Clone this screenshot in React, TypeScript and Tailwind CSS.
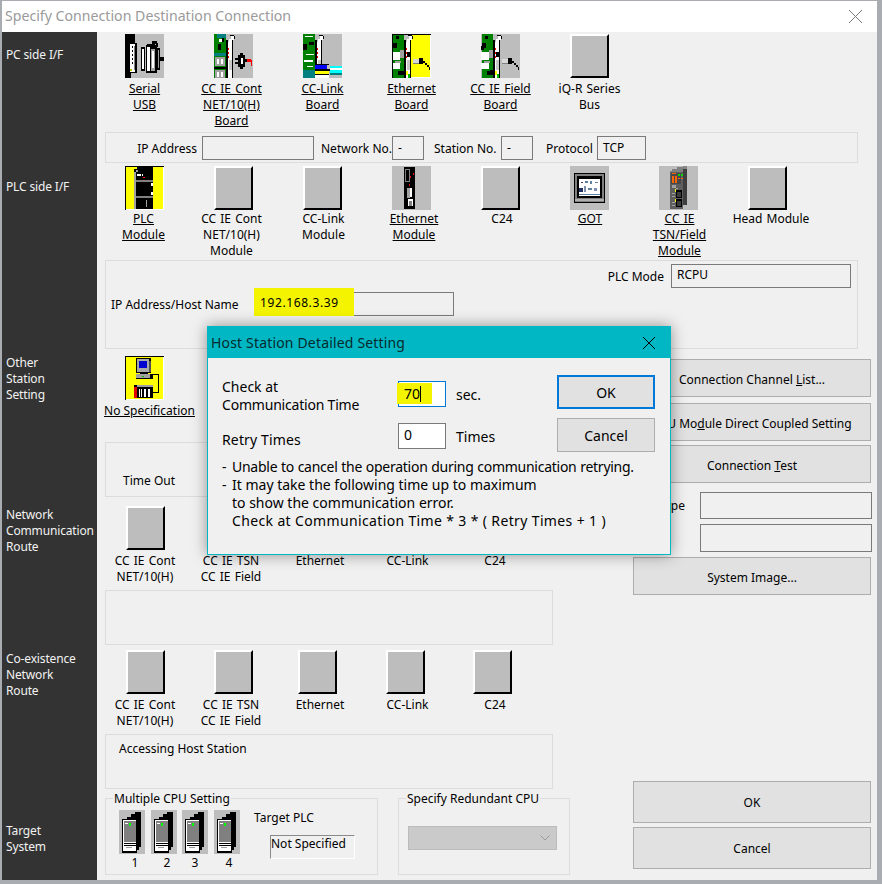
import React from 'react';

type Px = [number, number, number, number, string];

const G = '#bdbdbd';
const K = '#000000';
const W = '#ffffff';
const GR = '#008000';
const Y = '#ffff00';

// small bitmap drawing, same size as the 39x44 toolbar images
const Pix = ({ rects, w = 39, h = 44, bg = G }: { rects: Px[]; w?: number; h?: number; bg?: string }) => (
  <svg width={w} height={h} viewBox={`0 0 ${w} ${h}`} shapeRendering="crispEdges" className="block shrink-0">
    <rect width={w} height={h} fill={bg} />
    {rects.map((r, i) => (
      <rect key={i} x={r[0]} y={r[1]} width={r[2]} height={r[3]} fill={r[4]} />
    ))}
  </svg>
);

const bracket: Px[] = [
  [12, 6, 2, 38, K], [14, 8, 4, 36, W], [18, 5, 1, 39, K], [15, 5, 3, 3, W], [17, 2, 3, 4, W], [16, 1, 4, 1, K], [20, 2, 1, 3, K],
  [14, 14, 1, 2, '#ff0000'], [14, 18, 1, 2, '#ff0000'], [14, 22, 1, 2, '#ff0000'], [15, 26, 3, 10, '#c8c8c8'],
];

const serial: Px[] = [
  [0, 0, 4, 44, K], [4, 0, 6, 9, K], [4, 39, 2, 5, K], [4, 9, 8, 30, K], [5, 10, 5, 28, W], [9, 12, 1, 24, '#808080'], [7, 12, 1, 2, K], [7, 16, 1, 2, K], [7, 20, 1, 2, K], [7, 24, 1, 2, K], [7, 28, 1, 2, K], [5, 35, 2, 2, '#c0c000'],
  [16, 13, 4, 24, K], [17, 15, 2, 20, W], [21, 11, 11, 28, K], [22, 10, 8, 1, K], [22, 13, 3, 24, W], [26, 15, 4, 22, '#a0a0a0'], [27, 17, 2, 17, W],
  [27, 7, 5, 3, K], [31, 9, 2, 4, K], [32, 14, 3, 22, K], [33, 16, 1, 18, '#9a9a9a'], [34, 23, 5, 4, K],
];

const ccCont: Px[] = [
  [0, 0, 12, 44, GR], [3, 0, 9, 4, '#008080'], [5, 5, 3, 3, W], [4, 10, 3, 6, K], [8, 4, 2, 4, K], [0, 19, 12, 3, '#008080'],
  [1, 23, 10, 9, '#a0a0a0'], [3, 25, 2, 5, W], [7, 25, 2, 5, W], [0, 33, 12, 2, K], [1, 36, 10, 8, '#a0a0a0'], [3, 38, 2, 5, W], [7, 38, 2, 5, W],
  ...bracket,
  [21, 24, 3, 2, K], [21, 28, 3, 2, K], [24, 21, 7, 12, K], [26, 19, 3, 16, K], [27, 24, 2, 6, W], [31, 25, 2, 3, K], [33, 25, 4, 3, '#ff0000'], [37, 26, 1, 6, '#ff0000'],
];

const ccLink: Px[] = [
  [0, 0, 12, 44, GR], [2, 2, 8, 1, W], [0, 10, 4, 6, K], [6, 8, 5, 3, K], [3, 20, 8, 1, W], [1, 26, 9, 2, W], [0, 36, 12, 8, '#008080'], [4, 32, 6, 1, W],
  ...bracket,
  [12, 30, 14, 1, K], [12, 31, 12, 4, '#0000ff'], [12, 35, 15, 2, K], [12, 37, 14, 3, Y], [12, 40, 14, 1, K], [12, 41, 14, 3, W],
  [27, 32, 12, 2, '#00ffff'], [27, 34, 12, 2, W], [27, 36, 12, 3, '#00ffff'], [27, 39, 12, 2, '#008080'],
];

const boardPhoto: Px[] = [
  [1, 0, 11, 44, GR], [4, 2, 3, 3, K], [1, 9, 4, 5, K], [0, 18, 8, 8, W], [8, 16, 4, 8, '#a0a0a0'], [0, 29, 8, 6, W], [6, 37, 6, 4, K], [3, 27, 6, 2, '#a0a0a0'],
  ...bracket,
  [15, 18, 3, 5, K], [14, 37, 2, 4, Y], [16, 40, 2, 4, '#00c000'],
];

const plug: Px[] = [
  [21, 25, 6, 5, '#d8d8d8'], [21, 29, 6, 1, '#808080'], [27, 24, 4, 6, K], [31, 27, 2, 2, K], [33, 29, 2, 2, K], [35, 31, 2, 2, K], [37, 33, 1, 3, K],
];

const ethBoard: Px[] = [
  [18, 0, 21, 44, Y], [38, 0, 1, 44, W], [0, 43, 39, 1, W], [0, 0, 39, 1, K], [0, 0, 1, 44, K],
  ...boardPhoto, ...plug, [0, 0, 39, 1, K], [0, 0, 1, 44, K],
];
const ieBoard: Px[] = [...boardPhoto, [0, 12, 3, 4, K], [9, 36, 3, 3, K], ...plug];

const plcMod: Px[] = [
  [0, 0, 39, 1, K], [0, 0, 1, 44, K], [1, 1, 38, 43, Y], [38, 1, 1, 43, W], [1, 43, 38, 1, W],
  [9, 5, 19, 38, K], [12, 1, 16, 4, K], [9, 3, 3, 4, K], [9, 6, 2, 37, '#a0a0a0'], [11, 4, 2, 2, '#a0a0a0'], [11, 14, 17, 2, '#808080'], [11, 30, 17, 2, '#808080'],
  [12, 8, 4, 2, W], [17, 8, 1, 2, W], [18, 11, 2, 1, '#ff0000'], [26, 17, 2, 3, W], [26, 26, 2, 3, W], [21, 34, 1, 7, '#a0a0a0'],
];

const ethMod: Px[] = [
  [12, 1, 11, 41, K], [13, 3, 5, 13, '#808080'], [14, 4, 3, 11, K], [18, 10, 1, 2, '#ff0000'], [21, 7, 1, 2, '#ff0000'], [17, 18, 1, 2, '#ff0000'],
  [15, 22, 3, 10, '#a0a0a0'], [18, 22, 2, 9, W], [16, 33, 5, 7, W], [17, 35, 3, 5, '#808080'], [12, 42, 11, 1, K],
];

const got: Px[] = [
  [4, 7, 31, 30, K], [5, 8, 29, 28, '#808080'], [7, 10, 25, 22, K], [9, 13, 21, 17, W], [11, 16, 2, 1, '#404060'], [15, 15, 3, 2, '#6080a0'], [20, 15, 2, 3, '#6080a0'], [25, 16, 3, 1, '#6080a0'],
  [9, 22, 4, 4, '#203060'], [14, 20, 2, 6, '#8090b0'], [18, 22, 4, 2, '#6080a0'], [24, 22, 3, 3, '#8090b0'], [9, 28, 21, 1, '#6080a0'], [5, 33, 29, 2, '#b0b0b0'],
];

const tsn: Px[] = [
  [11, 5, 13, 38, '#5e5e5e'], [24, 3, 4, 36, '#3e3e3e'], [24, 0, 4, 3, '#888888'], [11, 5, 13, 1, '#808080'], [13, 3, 11, 2, '#808080'], [18, 1, 7, 2, '#808080'],
  [12, 7, 10, 11, '#484848'], [13, 7, 4, 1, '#ff6600'], [13, 10, 2, 7, '#ff6600'], [16, 10, 2, 7, '#ff6600'], [19, 8, 2, 2, '#00e000'], [22, 8, 2, 2, '#00e000'], [19, 12, 2, 1, '#ff6600'], [22, 12, 2, 1, '#ff6600'],
  [13, 19, 4, 3, '#a0a0a0'], [17, 22, 2, 1, '#a0a0a0'], [17, 24, 6, 8, K], [16, 23, 1, 3, Y], [18, 26, 4, 5, '#3a3a3a'], [17, 33, 6, 8, K], [16, 33, 1, 3, Y], [18, 35, 4, 5, '#3a3a3a'],
  [13, 27, 3, 1, '#a0a0a0'], [13, 30, 3, 1, '#a0a0a0'], [13, 36, 3, 1, '#a0a0a0'], [13, 39, 3, 1, '#a0a0a0'],
];

const noSpec: Px[] = [
  [0, 0, 39, 1, K], [0, 0, 1, 44, K], [1, 1, 38, 43, Y], [38, 1, 1, 43, W], [1, 43, 38, 1, W],
  [11, 2, 15, 15, K], [12, 3, 12, 13, '#a8a8a8'], [14, 5, 8, 7, '#0000d0'], [24, 5, 2, 11, '#505050'], [15, 16, 8, 2, K],
  [11, 18, 15, 5, '#a0a0a0'], [11, 22, 15, 1, K], [17, 20, 2, 1, '#00c000'], [25, 18, 3, 5, K], [28, 18, 6, 1, K], [33, 18, 1, 19, K], [28, 36, 6, 1, K],
  [9, 29, 19, 13, K], [9, 31, 3, 11, '#e00000'], [12, 29, 16, 2, '#a0a0a0'], [14, 33, 3, 8, W], [19, 33, 2, 8, W], [23, 33, 2, 8, W], [15, 33, 1, 8, K],
];

const server: Px[] = [
  [16, 2, 6, 2, K], [12, 4, 10, 3, K], [8, 7, 14, 2, K], [18, 9, 4, 28, K], [18, 37, 2, 3, K],
  [3, 9, 15, 1, K], [3, 10, 1, 32, K], [4, 10, 14, 32, W], [5, 11, 12, 21, '#808080'], [17, 10, 1, 32, K], [6, 13, 3, 1, W], [10, 13, 2, 3, '#00ff00'],
  [5, 33, 12, 1, K], [5, 35, 12, 1, K], [7, 37, 6, 1, '#a0a0a0'], [3, 41, 15, 2, K],
];

const Blank = () => (
  <div className="h-[44px] w-[39px] shrink-0 border-2 border-t-white border-l-white border-r-black border-b-black bg-[#bdbdbd]" />
);

type Item = { rects?: Px[]; lines: string[]; u?: boolean; lc?: string; ic?: string };

const Cell = ({ it, w, gap = 'mt-[3px]' }: { it: Item; w: string; gap?: string }) => (
  <div className={`${w} flex shrink-0 flex-col items-center`}>
    <div className={it.ic}>{it.rects ? <Pix rects={it.rects} /> : <Blank />}</div>
    <div className={`${gap} text-center leading-[16px] whitespace-nowrap [word-spacing:1px] ${it.lc ?? ''}`}>
      {it.lines.map((l) => (
        <div key={l} className={it.u ? 'underline' : ''}>{l}</div>
      ))}
    </div>
  </div>
);

const pcSide: Item[] = [
  { rects: serial, lines: ['Serial', 'USB'], u: true },
  { rects: ccCont, lines: ['CC IE Cont', 'NET/10(H)', 'Board'], u: true, lc: 'pr-[4px]' },
  { rects: ccLink, lines: ['CC-Link', 'Board'], u: true },
  { rects: ethBoard, lines: ['Ethernet', 'Board'], u: true },
  { rects: ieBoard, lines: ['CC IE Field', 'Board'], u: true },
  { lines: ['iQ-R Series', 'Bus'] },
];

const plcSide: Item[] = [
  { rects: plcMod, lines: ['PLC', 'Module'], u: true, lc: 'pr-[2px]' },
  { lines: ['CC IE Cont', 'NET/10(H)', 'Module'], lc: 'pr-[4px]' },
  { lines: ['CC-Link', 'Module'], lc: 'pl-[2px]' },
  { rects: ethMod, lines: ['Ethernet', 'Module'], u: true, lc: 'pl-[5px]' },
  { lines: ['C24'], lc: 'pl-[3px]' },
  { rects: got, lines: ['GOT'], u: true, lc: 'pl-[1px]' },
  { rects: tsn, lines: ['CC IE', 'TSN/Field', 'Module'], u: true, lc: 'pl-[2px]' },
  { lines: ['Head Module'], lc: 'pl-[7px]' },
];

const routeWidths = ['w-[88px]', 'w-[87px]', 'w-[88px]', 'w-[87px]', 'w-[88px]'];
const routes: Item[] = [
  { lines: ['CC IE Cont', 'NET/10(H)'] },
  { lines: ['CC IE TSN', 'CC IE Field'], ic: 'mr-[-2px]', lc: 'pr-[3px]' },
  { lines: ['Ethernet'], ic: 'mr-[5px]' },
  { lines: ['CC-Link'], ic: 'mr-[5px]' },
  { lines: ['C24'], ic: 'mr-[5px]' },
];

const Field = ({ w, children }: { w: string; children?: React.ReactNode }) => (
  <div className={`${w} flex h-[24px] shrink-0 items-center border border-[#7a7a7a] bg-[#f0f0f0] pl-[5px]`}>{children}</div>
);

const Btn = ({ h, children, cls }: { h: string; children: React.ReactNode; cls?: string }) => (
  <div className={`${h} flex w-[238px] items-center justify-center whitespace-nowrap border border-[#adadad] bg-[#e1e1e1] ${cls ?? 'pt-[4px]'}`}>{children}</div>
);

const Side = ({ cls, lines }: { cls: string; lines: string[] }) => (
  <div className={`${cls} leading-[16px] tracking-[-0.15px] whitespace-nowrap`}>
    {lines.map((l) => (
      <div key={l}>{l}</div>
    ))}
  </div>
);

const HostDialog = () => (
  <div className="absolute left-[205px] top-[325px] z-10 h-[229px] w-[464px] border border-[#00b7c3] bg-[#f0f0f0] text-[14px] text-black shadow-[0_0_14px_rgba(0,0,0,0.4)]">
    <div className="flex h-[31px] items-center justify-between bg-[#00b7c3] pl-[3px] pr-[15px] text-[#062a2e]">
      <span className="tracking-[0.17px]">Host Station Detailed Setting</span>
      <svg width="12" height="12" viewBox="0 0 12 12" className="block">
        <path d="M0 0L12 12M12 0L0 12" stroke="#000" strokeWidth="1" fill="none" />
      </svg>
    </div>
    <div className="pl-[14px] pr-[15px] pt-[17px]">
      <div className="flex justify-between">
        <div className="pt-[3px]">
          <div className="flex h-[36px] leading-[18px]">
            <div className="w-[176px]">
              <div>Check at</div>
              <div className="tracking-[-0.2px]">Communication Time</div>
            </div>
            <div className="relative mt-[3px] flex h-[26px] w-[48px] items-center border border-[#0078d7] bg-white pl-[5px]">
              <div className="absolute -left-[2px] top-[1px] h-[21px] w-[35px] bg-[#f4f400]" />
              <span className="relative">70</span>
              <span className="relative h-[16px] w-px bg-black" />
            </div>
            <span className="ml-[10px] mt-[8px]">sec.</span>
          </div>
          <div className="mt-[9px] flex h-[26px]">
            <div className="w-[176px] pt-[8px] leading-[18px] tracking-[0.15px]">Retry Times</div>
            <div className="flex h-[26px] w-[48px] items-center border border-[#7a7a7a] bg-white pb-[3px] pl-[5px]">0</div>
            <span className="ml-[10px] mt-[5px] leading-[18px]">Times</span>
          </div>
        </div>
        <div className="flex flex-col gap-[9px]">
          <div className="flex h-[34px] w-[98px] items-center justify-center border-2 border-[#0078d7] bg-[#e1e1e1]">OK</div>
          <div className="flex h-[34px] w-[98px] items-center justify-center border border-[#adadad] bg-[#e1e1e1]">Cancel</div>
        </div>
      </div>
      <div className="mt-[6px] leading-[18px] whitespace-nowrap">
        <div className="flex">
          <span className="w-[10px]">-</span>
          <span className="tracking-[-0.26px] [word-spacing:0.3px]">Unable to cancel the operation during communication retrying.</span>
        </div>
        <div className="flex">
          <span className="w-[10px]">-</span>
          <span>It may take the following time up to maximum</span>
        </div>
        <div className="pl-[10px]">to show the communication error.</div>
        <div className="pl-[10px] tracking-[0.36px]">Check at Communication Time * 3 * ( Retry Times + 1 )</div>
      </div>
    </div>
  </div>
);

const App: React.FC = () => {
  return (
    <div className="h-[884px] w-[882px] overflow-hidden bg-[#a9acb0] pl-[2px] pt-[1px] font-['Noto_Sans',sans-serif] text-[12px] text-black">
      <div className="relative flex h-[879px] w-[875px] flex-col bg-[#f0f0f0]">
        {/* title bar */}
        <div className="flex h-[31px] shrink-0 items-center justify-between bg-white pb-px pl-[3px] pr-[15px] text-[14.15px] text-[#9a9a9a]">
          <span>Specify Connection Destination Connection</span>
          <svg width="13" height="13" viewBox="0 0 13 13" className="block">
            <path d="M0 0L13 13M13 0L0 13" stroke="#777" strokeWidth="1" fill="none" />
          </svg>
        </div>

        <div className="flex min-h-0 flex-1">
          <div className="w-[95px] shrink-0 bg-[#333333] pl-[4px] text-[#f2f2f2]">
            <Side cls="mt-[15px]" lines={['PC side I/F']} />
            <Side cls="mt-[116px]" lines={['PLC side I/F']} />
            <Side cls="mt-[160px]" lines={['Other', 'Station', 'Setting']} />
            <Side cls="mt-[104px]" lines={['Network', 'Communication', 'Route']} />
            <Side cls="mt-[96px]" lines={['Co-existence', 'Network', 'Route']} />
            <Side cls="mt-[124px]" lines={['Target', 'System']} />
          </div>

          <div className="min-w-0 flex-1 pt-[2px]">
            <div className="flex h-[94px] pl-[3px]">
              {pcSide.map((it) => (
                <Cell key={it.lines.join()} it={it} w="w-[89px]" />
              ))}
            </div>

            <div className="ml-[8px] mt-[4px] flex h-[31px] w-[753px] items-center whitespace-nowrap border border-[#dcdcdc]">
              <span className="w-[91px] pt-[2px] text-right">IP Address</span>
              <div className="ml-[5px]"><Field w="w-[112px]" /></div>
              <span className="ml-[7px] w-[67px] pt-[2px]">Network No.</span>
              <div className="ml-[4px]"><Field w="w-[32px]">-</Field></div>
              <span className="ml-[10px] w-[63px] pt-[2px]">Station No.</span>
              <div className="ml-[4px]"><Field w="w-[32px]">-</Field></div>
              <span className="ml-[13px] w-[47px] pt-[2px]">Protocol</span>
              <div className="ml-[4px]"><Field w="w-[49px]">TCP</Field></div>
            </div>

            <div className="mt-[3px] flex h-[94px] pl-[3px]">
              {plcSide.map((it) => (
                <Cell key={it.lines.join()} it={it} w="w-[89px]" gap="mt-px" />
              ))}
            </div>

            <div className="ml-[8px] h-[89px] w-[753px] border border-[#dcdcdc] pt-[3px]">
              <div className="flex items-center justify-end pr-[6px]">
                <span className="mr-[7px] pt-[2px]">PLC Mode</span>
                <Field w="w-[180px]">
                  <span className="-mt-[2px]">RCPU</span>
                </Field>
              </div>
              <div className="mt-[4px] flex items-center pl-[5px]">
                <span className="w-[143px] pt-[2px]">IP Address/Host Name</span>
                <div className="relative">
                  <Field w="w-[200px]" />
                  <div className="absolute -top-[4px] bottom-0 left-0 flex w-[100px] items-center bg-[#f4f400] pl-[6px] pt-[2px] tracking-[0.6px]">192.168.3.39</div>
                </div>
              </div>
            </div>

            <div className="flex">
              <div className="w-[536px] shrink-0">
                <div className="mt-[7px] flex h-[86px] w-[100px] flex-col items-center pl-[5px]">
                  <div className="mr-[10px]"><Pix rects={noSpec} /></div>
                  <div className="mt-[3px] whitespace-nowrap leading-[16px] underline">No Specification</div>
                </div>
                <div className="ml-[8px] h-[55px] w-[520px] border border-[#dcdcdc] pl-[17px] pt-[30px] leading-[16px]">Time Out</div>
                <div className="mt-[9px] flex h-[78px] pl-[4px]">
                  {routes.map((it, i) => (
                    <Cell key={it.lines.join()} it={it} w={routeWidths[i]} />
                  ))}
                </div>
                <div className="ml-[8px] mt-[6px] h-[55px] w-[448px] border border-[#dcdcdc]" />
                <div className="mt-[5px] flex h-[78px] pl-[4px]">
                  {routes.map((it, i) => (
                    <Cell key={it.lines.join()} it={it} w={routeWidths[i]} />
                  ))}
                </div>
                <div className="ml-[8px] mt-[6px] h-[55px] w-[448px] border border-[#dcdcdc] pl-[13px] pt-[6px] leading-[16px]">Accessing Host Station</div>

                <div className="ml-[8px] flex gap-[20px]">
                  <fieldset className="h-[86px] w-[273px] border border-[#dcdcdc]">
                    <legend className="ml-[7px] px-px pt-[2px] leading-[16px]">Multiple CPU Setting</legend>
                    <div className="flex pl-[13px] pt-[3px]">
                      {[
                        ['1', 'mr-[6px]', 'pl-[6px]'],
                        ['2', 'mr-[5px]', 'pl-[6px]'],
                        ['3', 'mr-[6px]', 'pl-0'],
                        ['4', 'mr-0', 'pl-[4px]'],
                      ].map(([n, m, p]) => (
                        <div key={n} className={`flex w-[26px] flex-col items-center ${m}`}>
                          <Pix rects={server} w={26} />
                          <div className={`mt-px leading-[16px] ${p}`}>{n}</div>
                        </div>
                      ))}
                      <div className="ml-[14px]">
                        <div className="leading-[16px]">Target PLC</div>
                        <div className="ml-[16px] mt-[9px] h-[24px] w-[85px] border border-b-white border-l-[#8a8a8a] border-r-white border-t-[#8a8a8a] leading-[16px]">Not Specified</div>
                      </div>
                    </div>
                  </fieldset>
                  <fieldset className="h-[86px] w-[172px] border border-[#dcdcdc]">
                    <legend className="ml-[7px] px-px pt-[2px] leading-[16px]">Specify Redundant CPU</legend>
                    <div className="ml-[9px] mt-[19px] flex h-[24px] w-[149px] items-center justify-end border border-[#bcbcbc] bg-[#cacaca] pr-[6px]">
                      <svg width="10" height="6" viewBox="0 0 10 6" className="block">
                        <path d="M0.5 0.5L5 5L9.5 0.5" stroke="#9a9a9a" fill="none" />
                      </svg>
                    </div>
                  </fieldset>
                </div>
              </div>

              <div className="flex min-h-0 w-[238px] shrink-0 flex-col pt-[10px]">
                <Btn h="h-[38px]">
                  <span>Connection Channel <u>L</u>ist...</span>
                </Btn>
                <Btn h="h-[38px]" cls="mt-[6px] pt-[4px]">
                  <span>CPU Mo<u>d</u>ule Direct Coupled Setting</span>
                </Btn>
                <Btn h="h-[38px]" cls="mt-[4px] pt-[4px]">
                  <span>Connection <u>T</u>est</span>
                </Btn>
                <div className="mt-[9px] flex items-center justify-end">
                  <span className="mr-[15px] shrink-0 whitespace-nowrap">CPU Type</span>
                  <div className="-mr-px h-[27px] w-[172px] shrink-0 border border-[#7a7a7a] bg-[#f0f0f0]" />
                </div>
                <div className="-mr-px mt-[5px] ml-auto h-[28px] w-[172px] shrink-0 border border-[#7a7a7a] bg-[#f0f0f0]" />
                <Btn h="h-[38px]" cls="mt-[5px] pt-[4px]">
                  <span>System Ima<u>g</u>e...</span>
                </Btn>
                <Btn h="h-[42px]" cls="mt-[186px] pt-[2px]">OK</Btn>
                <Btn h="h-[42px]" cls="mt-[4px] pt-[2px]">Cancel</Btn>
              </div>
            </div>
          </div>
        </div>

        <HostDialog />
      </div>
    </div>
  );
};

export default App;
